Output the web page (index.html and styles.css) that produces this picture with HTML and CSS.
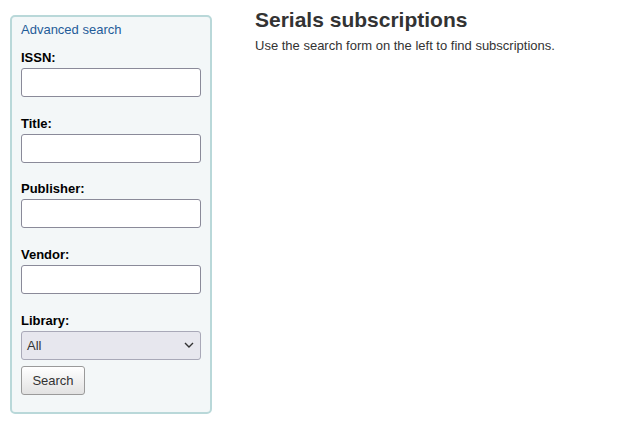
FILE: index.html
```html
<!DOCTYPE html>
<html>
<head>
<meta charset="utf-8">
<link rel="stylesheet" href="styles.css">
</head>
<body>
<div class="page">
  <aside class="panel">
    <a class="adv" href="#">Advanced search</a>
    <form class="form">
      <div class="field">
        <label>ISSN:</label>
        <input type="text" class="inp">
      </div>
      <div class="field">
        <label>Title:</label>
        <input type="text" class="inp">
      </div>
      <div class="field">
        <label>Publisher:</label>
        <input type="text" class="inp">
      </div>
      <div class="field">
        <label>Vendor:</label>
        <input type="text" class="inp">
      </div>
      <div class="field last">
        <label>Library:</label>
        <div class="select">
          <span>All</span>
          <svg width="10" height="6" viewBox="0 0 10 6"><path d="M1 1l4 4 4-4" fill="none" stroke="#333" stroke-width="1.4"/></svg>
        </div>
      </div>
      <button type="button" class="btn">Search</button>
    </form>
  </aside>
  <main class="main">
    <h1>Serials subscriptions</h1>
    <p>Use the search form on the left to find subscriptions.</p>
  </main>
</div>
</body>
</html>
```
FILE: styles.css
```css
* { box-sizing: border-box; }
body {
  margin: 0;
  font-family: "Liberation Sans", Arial, sans-serif;
  font-size: 13px;
  color: #333;
  background: #fff;
}
.page {
  display: flex;
  align-items: flex-start;
  padding: 0 10px;
  gap: 43px;
}
.panel {
  margin-top: 15px;
  width: 202px;
  background: #f3f7f8;
  border: 2px solid #b9d8d9;
  border-radius: 5px;
  padding: 5px 9px 17px 9px;
  display: flex;
  flex-direction: column;
}
.adv {
  color: #1f5c99;
  text-decoration: none;
  font-size: 13px;
  line-height: 16px;
}
.form {
  display: flex;
  flex-direction: column;
  margin-top: 12px;
}
.field {
  display: flex;
  flex-direction: column;
  margin-bottom: 18.67px;
}
.field.last { margin-bottom: 6px; }
.field label {
  font-weight: bold;
  color: #000;
  line-height: 15px;
  margin-bottom: 3px;
}
.inp {
  width: 180px;
  height: 29px;
  border: 1px solid #8a8a99;
  border-radius: 3px;
  background: #fff;
  margin: 0;
}
.select {
  width: 180px;
  height: 29px;
  border: 1px solid #a9a9b8;
  border-radius: 3px;
  background: #e7e7ee;
  display: flex;
  align-items: center;
  justify-content: space-between;
  padding: 0 6px 0 5px;
  color: #333;
}
.btn {
  align-self: flex-start;
  width: 64px;
  height: 29px;
  border: 1px solid #9a9a9a;
  border-radius: 3px;
  background: linear-gradient(#ffffff, #e2e2e2);
  font-family: "Liberation Sans", Arial, sans-serif;
  font-size: 13px;
  color: #333;
  padding: 0;
}
.main h1 {
  margin: 7px 0 0 0;
  font-size: 21px;
  line-height: 26px;
  font-weight: bold;
  color: #333;
}
.main p {
  margin: 5px 0 0 0;
  line-height: 16px;
}
```
